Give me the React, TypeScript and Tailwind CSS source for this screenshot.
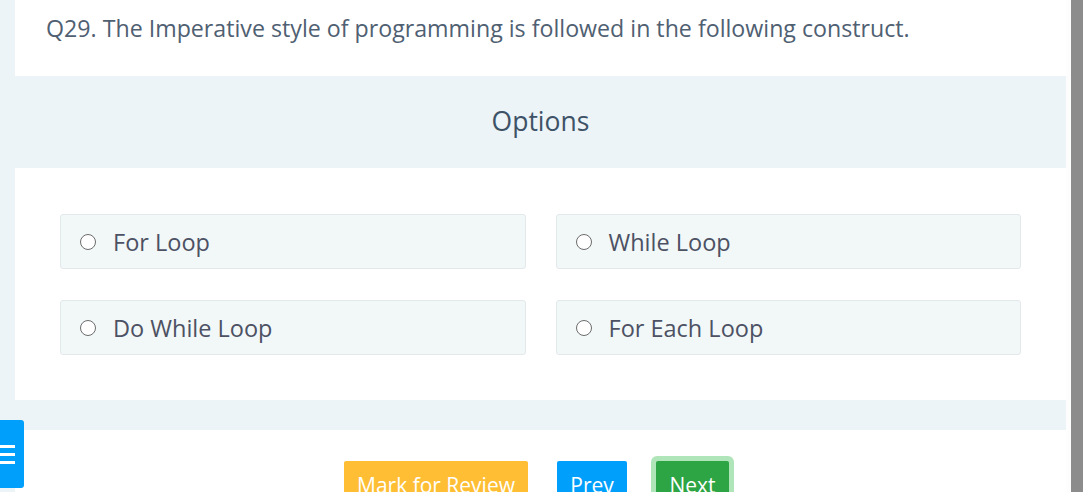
import React from "react";

const OPTIONS = ["For Loop", "While Loop", "Do While Loop", "For Each Loop"];

function Radio() {
  return <span className="block h-[16px] w-[16px] shrink-0 rounded-full border-[1.5px] border-[#6b6b6b] bg-white" />;
}

export default function App() {
  return (
    <div className="relative flex h-[492px] w-full overflow-hidden bg-white font-['Open_Sans',sans-serif]">
      <div className="w-[15px] shrink-0 bg-[#ecf4f7]" />
      <main className="flex w-[1051px] shrink-0 flex-col">
        <section className="h-[76px] shrink-0 bg-white pl-[31px] pt-[12px]">
          <p className="text-[23.2px] leading-[32px] text-[#4f6072]">
            Q29. The Imperative style of programming is followed in the following construct.
          </p>
        </section>
        <section className="flex h-[92px] shrink-0 items-center justify-center bg-[#ecf4f7]">
          <h2 className="text-[26.5px] text-[#3e5267]">Options</h2>
        </section>
        <section className="h-[232px] shrink-0 bg-white px-[45px] pt-[46px]">
          <div className="grid grid-cols-2 gap-x-[30px] gap-y-[31px]">
            {OPTIONS.map((opt) => (
              <label
                key={opt}
                className="flex h-[55px] items-center gap-[17px] rounded-[3px] border border-[#e3e9eb] bg-[#f2f7f8] pl-[19px]"
              >
                <Radio />
                <span className="text-[23.5px] leading-[30px] text-[#4c5163]">{opt}</span>
              </label>
            ))}
          </div>
        </section>
        <div className="h-[30px] shrink-0 bg-[#ecf4f7]" />
        <section className="flex shrink-0 items-start gap-[29px] bg-white pl-[329px] pt-[31px]">
          <button className="h-[44px] w-[184px] rounded-[2px] bg-[#ffbe33] pt-[4px] text-[21px] leading-[28px] text-white">
            Mark for Review
          </button>
          <button className="h-[44px] w-[70px] rounded-[2px] bg-[#009ffc] pt-[4px] text-[21px] leading-[28px] text-white">
            Prev
          </button>
          <button className="h-[44px] w-[73px] rounded-[2px] bg-[#2ea544] pt-[4px] text-[21px] leading-[28px] text-white ring-[5px] ring-[#afe5b9]">
            Next
          </button>
        </section>
      </main>
      <div className="w-[5px] shrink-0 bg-[#fdfdfd]" />
      <div className="w-[12px] shrink-0 bg-[#8c8c8c]" />

      <button className="absolute left-0 top-[420px] flex h-[68px] w-[24px] flex-col justify-center gap-[5px] rounded-r-[3px] bg-[#009ffc]">
        <span className="block h-[3px] w-[15px] bg-white" />
        <span className="block h-[3px] w-[15px] bg-white" />
        <span className="block h-[3px] w-[15px] bg-white" />
      </button>
    </div>
  );
}
